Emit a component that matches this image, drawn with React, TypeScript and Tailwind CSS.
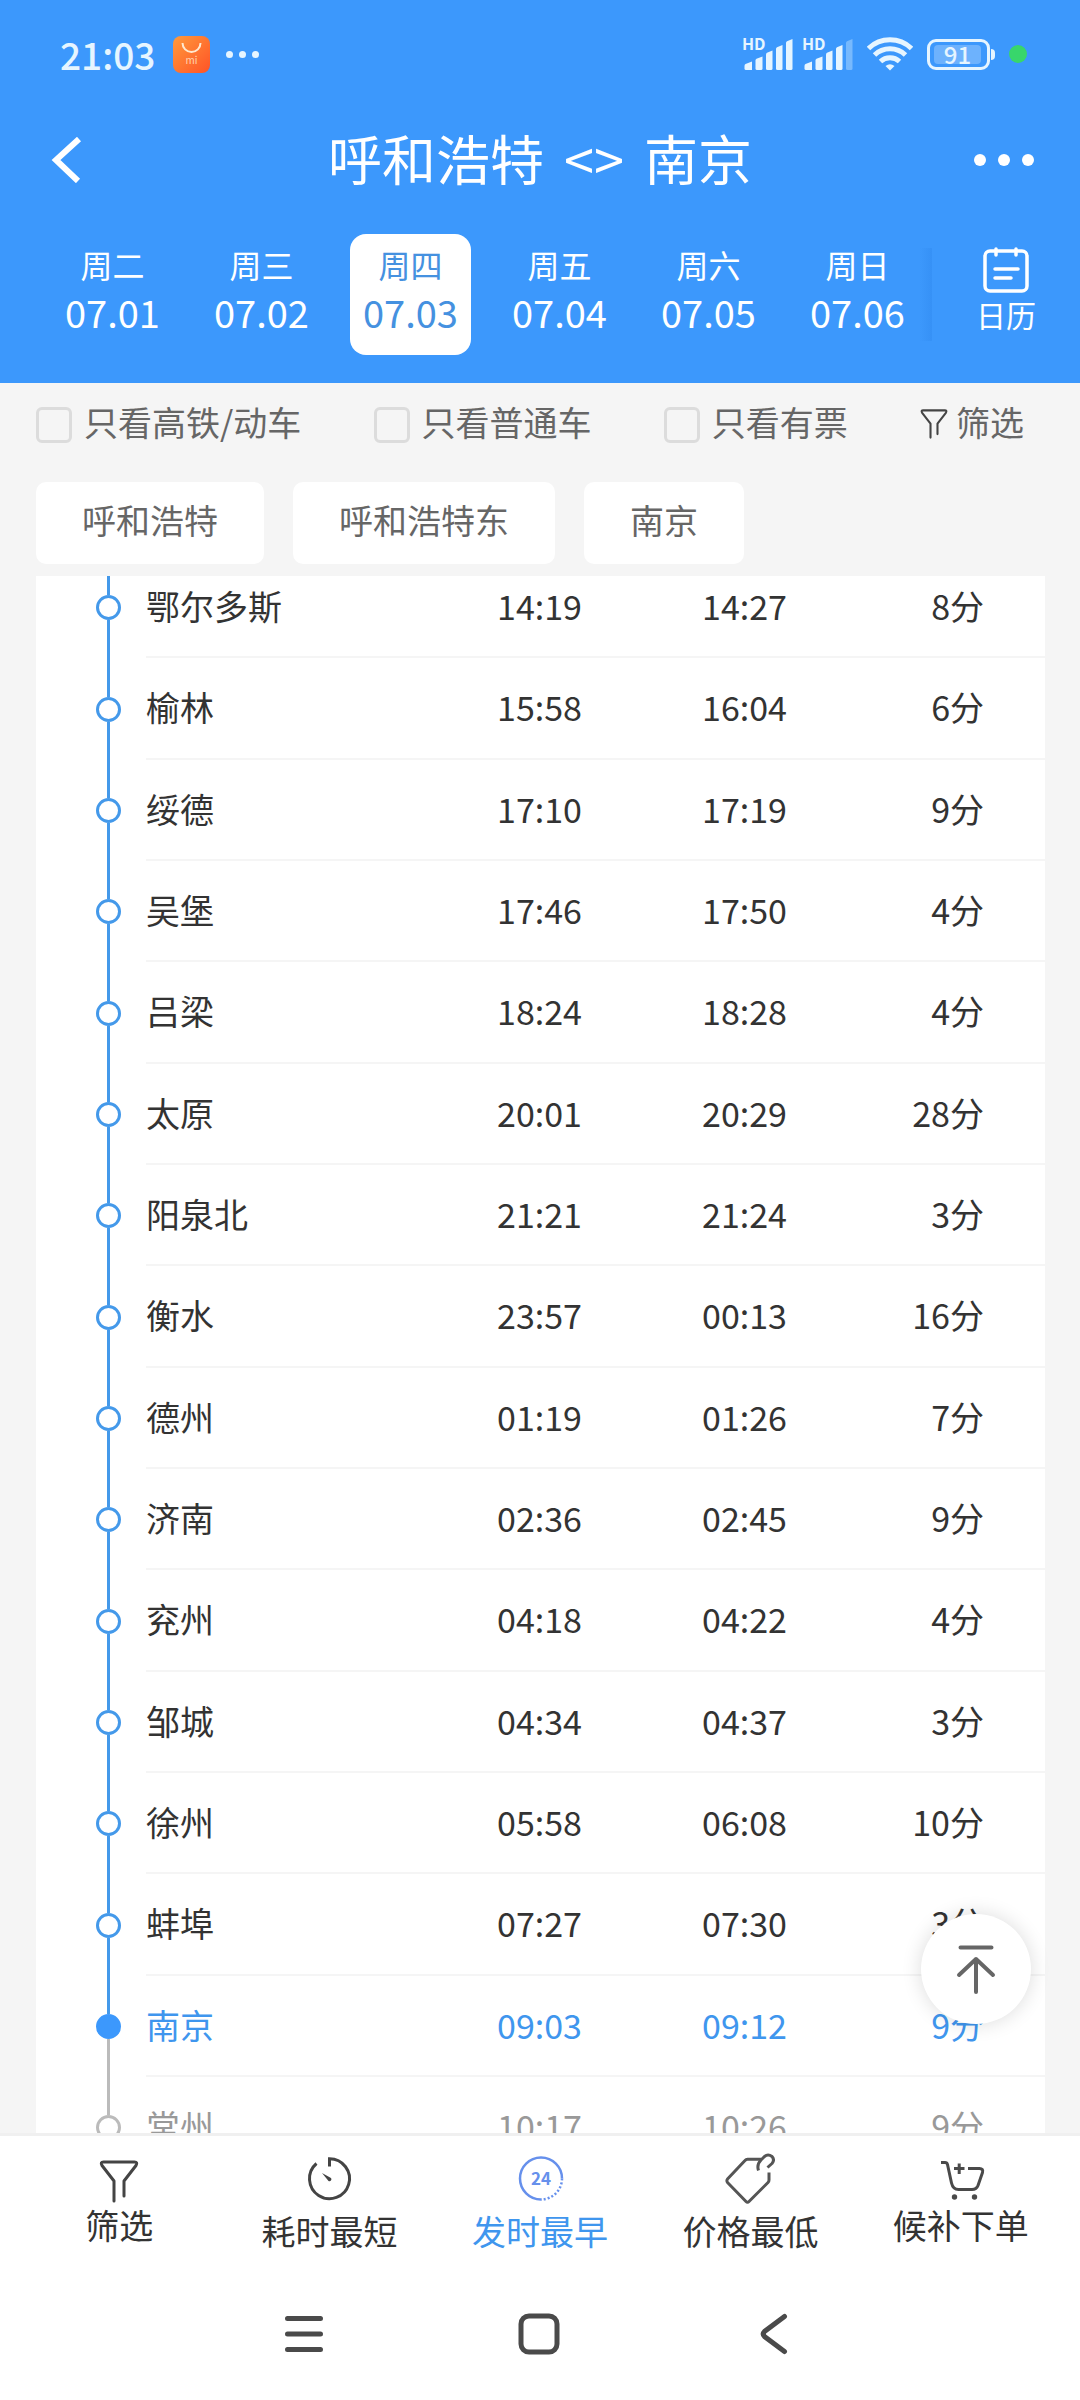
import { useState } from "react";

type Stop = {
  name: string;
  arrive: string;
  depart: string;
  stay: string;
  state?: "current" | "after";
};

const days = [
  { week: "周二", date: "07.01" },
  { week: "周三", date: "07.02" },
  { week: "周四", date: "07.03" },
  { week: "周五", date: "07.04" },
  { week: "周六", date: "07.05" },
  { week: "周日", date: "07.06" },
];

const filters = ["只看高铁/动车", "只看普通车", "只看有票"];

const stations = ["呼和浩特", "呼和浩特东", "南京"];

const stops: Stop[] = [
  { name: "鄂尔多斯", arrive: "14:19", depart: "14:27", stay: "8分" },
  { name: "榆林", arrive: "15:58", depart: "16:04", stay: "6分" },
  { name: "绥德", arrive: "17:10", depart: "17:19", stay: "9分" },
  { name: "吴堡", arrive: "17:46", depart: "17:50", stay: "4分" },
  { name: "吕梁", arrive: "18:24", depart: "18:28", stay: "4分" },
  { name: "太原", arrive: "20:01", depart: "20:29", stay: "28分" },
  { name: "阳泉北", arrive: "21:21", depart: "21:24", stay: "3分" },
  { name: "衡水", arrive: "23:57", depart: "00:13", stay: "16分" },
  { name: "德州", arrive: "01:19", depart: "01:26", stay: "7分" },
  { name: "济南", arrive: "02:36", depart: "02:45", stay: "9分" },
  { name: "兖州", arrive: "04:18", depart: "04:22", stay: "4分" },
  { name: "邹城", arrive: "04:34", depart: "04:37", stay: "3分" },
  { name: "徐州", arrive: "05:58", depart: "06:08", stay: "10分" },
  { name: "蚌埠", arrive: "07:27", depart: "07:30", stay: "3分" },
  { name: "南京", arrive: "09:03", depart: "09:12", stay: "9分", state: "current" },
  { name: "常州", arrive: "10:17", depart: "10:26", stay: "9分", state: "after" },
];

function Signal({ weak = false }: { weak?: boolean }) {
  return (
    <svg className="overflow-visible" width="51" height="36" viewBox="0 0 51 36" fill="#e6f5ff">
      <text x="0" y="14" fontSize="16" fontWeight="700">
        HD
      </text>
      <path d="M2.500 30q0-1.400 1-2L10 25.500V34H4q-1.500 0-1.500-1.500z" />
      <path d="M13.500 24.500q0-1.200 1-1.700l6-2.300V32.500q0 1.500-1.500 1.500h-4q-1.500 0-1.500-1.500z" />
      <path d="M24 18.500q0-1.200 1-1.800l5.500-2.200v18q0 1.500-1.500 1.500h-3.500q-1.500 0-1.500-1.500z" />
      <path d="M34 13q0-1.200 1-1.800L40.500 9v23.500q0 1.500-1.500 1.500h-3.500q-1.500 0-1.500-1.500z" />
      <path
        d="M44 7q0-1.200 1-1.800L50.500 3v29.500q0 1.500-1.500 1.500h-3.500q-1.500 0-1.500-1.500z"
        opacity={weak ? 0.35 : 1}
      />
    </svg>
  );
}

function Wifi() {
  return (
    <svg width="46" height="34" viewBox="0 0 46 34" fill="none" stroke="#e6f5ff" strokeWidth="5">
      <path d="M1.500 11.500a31 31 0 0 1 43 0" />
      <path d="M7.500 18a22.500 22.500 0 0 1 31 0" />
      <path d="M13.500 24.500a14 14 0 0 1 19 0" />
      <path d="M18.500 29q4.500-3.500 9 0L23 33.500z" fill="#e6f5ff" stroke="none" />
    </svg>
  );
}

function Funnel({ className }: { className: string }) {
  return (
    <svg
      className={className}
      viewBox="4 7 40 43"
      fill="none"
      stroke="currentColor"
      strokeWidth="3"
      strokeLinecap="round"
      strokeLinejoin="round"
    >
      <path d="M19 48V28L7 12.500Q5 9 8.500 9H39.500Q43 9 41 12.500L29 28V43" />
    </svg>
  );
}

function TimerIcon() {
  return (
    <svg width="50" height="56" viewBox="0 0 50 56" fill="none" stroke="#444" strokeWidth="3">
      <path d="M24.500 13.500V5.700A20 20 0 1 1 11.500 10.500" />
      <path d="M17 20l9 5a2 2 0 0 1-2.500 3z" fill="#444" stroke="none" />
    </svg>
  );
}

function Clock24() {
  return (
    <svg width="50" height="56" viewBox="0 0 50 56" fill="none" stroke="#6690ec" strokeWidth="2.500">
      <path d="M26 46.500A21 21 0 1 1 47 25.500" />
      <path d="M47 25.500A21 21 0 0 1 26 46.500" strokeDasharray="2 2" />
      <text
        x="26"
        y="31.500"
        fontSize="17"
        fontWeight="700"
        textAnchor="middle"
        fill="#6690ec"
        stroke="none"
      >
        24
      </text>
    </svg>
  );
}

function TagIcon() {
  return (
    <svg
      width="50"
      height="56"
      viewBox="0 0 50 56"
      fill="none"
      stroke="#555"
      strokeWidth="3"
      strokeLinejoin="round"
    >
      <path d="M36 6.300H22.500Q21 6.300 20 7.500L2.500 26Q1.300 27.700 2.500 29.500L21 48.500Q22.500 50 24 48.500L43 29.500Q44 28.500 44 27V19.500" />
      <path d="M33.500 17.500Q31.500 11.500 36 7L39.500 3.500Q43 .5 47 3.500Q50 7 47 10.500L42.500 14.500" />
    </svg>
  );
}

function CartIcon() {
  return (
    <svg
      width="50"
      height="50"
      viewBox="0 0 50 50"
      fill="none"
      stroke="#4a4a4a"
      strokeWidth="3"
      strokeLinejoin="round"
    >
      <path d="M5 9.500H9Q11 9.500 11.500 11.500L15.500 30Q17 36.500 22.500 36.500H36Q40.500 36.500 42 32.500L46.500 19.500Q47.500 15.500 43.500 15.500H32" />
      <path d="M18 15.500h10.500M23.200 10.500v10.500" />
      <circle cx="18.500" cy="44" r="2.700" fill="#4a4a4a" stroke="none" />
      <circle cx="38.500" cy="44" r="2.700" fill="#4a4a4a" stroke="none" />
    </svg>
  );
}

const sorts = [
  {
    label: "筛选",
    icon: (
      <span className="flex h-[50px] items-end text-[#444]">
        <Funnel className="h-[43px] w-10" />
      </span>
    ),
  },
  { label: "耗时最短", icon: <TimerIcon /> },
  { label: "发时最早", icon: <Clock24 /> },
  { label: "价格最低", icon: <TagIcon /> },
  { label: "候补下单", icon: <CartIcon /> },
];

function StatusBar() {
  return (
    <div className="flex h-[108px] items-center justify-between pl-[60px] pr-[53px] text-[#e6f5ff]">
      <div className="flex items-center">
        <span className="text-[37px] leading-[44px] font-medium">21:03</span>
        <svg className="ml-[18px]" width="37" height="37" viewBox="0 0 37 37">
          <defs>
            <linearGradient id="store" x1="0" y1="0" x2="1" y2="1">
              <stop offset="0" stopColor="#ff9a3c" />
              <stop offset="1" stopColor="#ff5326" />
            </linearGradient>
          </defs>
          <rect width="37" height="37" rx="8" fill="url(#store)" />
          <path d="M9.500 7a9 9 0 0 0 18 0" fill="none" stroke="#ffe9cf" strokeWidth="2" />
          <text x="18.500" y="28" fontSize="10" textAnchor="middle" fill="#ffd3b0">
            mi
          </text>
        </svg>
        <span className="ml-4 flex gap-1.5">
          <i className="size-[7px] rounded-full bg-[#e6f5ff]" />
          <i className="size-[7px] rounded-full bg-[#e6f5ff]" />
          <i className="size-[7px] rounded-full bg-[#e6f5ff]" />
        </span>
      </div>
      <div className="flex items-center gap-3.5">
        <span className="flex gap-[9px]">
          <Signal />
          <Signal weak />
        </span>
        <Wifi />
        <span className="flex items-center gap-px">
          <span className="flex h-[31px] w-[63px] items-center rounded-[9px] border-3 border-[#e6f5ff] px-1">
            <span className="flex h-[19px] w-[47px] items-center justify-center rounded-sm bg-white/25 text-[24px] leading-[24px] font-medium">
              91
            </span>
          </span>
          <i className="h-[11px] w-1 rounded-r-sm bg-[#e6f5ff]" />
        </span>
        <i className="size-[18px] rounded-full bg-[#38d66b]" />
      </div>
    </div>
  );
}

function StopRow({ stop, tall }: { stop: Stop; tall: boolean }) {
  const current = stop.state === "current";
  const after = stop.state === "after";
  const color = current ? "text-[#3f96ee]" : after ? "text-[#999]" : "text-[#333]";
  return (
    <tr className={`${tall ? "h-[102px]" : "h-[101px]"} ${color}`}>
      <td className="h-px p-0 pr-[25px] pl-[60px]">
        <div className="flex h-full flex-col items-center">
          <i className={`w-[3px] flex-1 ${after ? "bg-[#bbb]" : "bg-[#4499ea]"}`} />
          <i
            className={`size-[25px] rounded-full border-3 ${
              current
                ? "border-[#3c98fc] bg-[#3c98fc]"
                : after
                  ? "border-[#bbb]"
                  : "border-[#4499ea]"
            }`}
          />
          <i className={`w-[3px] flex-1 ${after || current ? "bg-[#bbb]" : "bg-[#4499ea]"}`} />
        </div>
      </td>
      <th scope="row" className="border-b-2 border-[#f5f5f5] p-0 pb-0.5 text-left font-normal">
        {stop.name}
      </th>
      <td className="border-b-2 border-[#f5f5f5] p-0 pb-0.5 text-center">{stop.arrive}</td>
      <td className="border-b-2 border-[#f5f5f5] p-0 pb-0.5 text-center">{stop.depart}</td>
      <td className="border-b-2 border-[#f5f5f5] p-0 pr-[61px] pb-0.5 text-right">{stop.stay}</td>
    </tr>
  );
}

export default function App() {
  const [day, setDay] = useState("07.03");
  const [sort, setSort] = useState("发时最早");

  return (
    <div className="flex h-screen flex-col bg-[#f5f5f5] font-['Noto_Sans_CJK_SC',sans-serif] text-[34px] leading-[44px] text-[#333]">
      <header className="bg-[#3c98fc] text-white">
        <StatusBar />
        <div className="flex h-[104px] items-center justify-between pr-[46px] pl-[50px]">
          <button aria-label="返回" className="w-[60px]">
            <svg width="32" height="46" viewBox="0 0 32 46" fill="none" stroke="#fff" strokeWidth="6">
              <path d="M29 2L6 23L28 44" />
            </svg>
          </button>
          <h1 className="pr-1 pb-1 text-[54px] leading-[64px]">
            呼和浩特<span className="mx-5">&lt;&gt;</span>南京
          </h1>
          <button aria-label="更多" className="flex gap-3">
            <i className="size-3 rounded-full bg-white" />
            <i className="size-3 rounded-full bg-white" />
            <i className="size-3 rounded-full bg-white" />
          </button>
        </div>

        <div className="flex pt-[22px] pb-7 pl-[38px]">
          <div className="grid flex-1 grid-cols-6 justify-items-center">
            {days.map((d) => (
              <button
                key={d.date}
                onClick={() => setDay(d.date)}
                className={`flex h-[121px] w-[121px] flex-col items-center rounded-2xl pt-2 ${
                  d.date === day ? "bg-white text-[#4591e0]" : ""
                }`}
              >
                <span className="text-[32px] leading-[44px]">{d.week}</span>
                <span className="text-[38px] leading-[52px]">{d.date}</span>
              </button>
            ))}
          </div>
          <div className="my-3.5 -ml-3 w-3 bg-linear-to-r from-[#3c98fc] to-[#3691f6]" />
          <button className="flex w-[148px] flex-col items-center pt-3">
            <svg
              width="46"
              height="48"
              viewBox="0 0 46 48"
              fill="none"
              stroke="#fff"
              strokeWidth="3.500"
              strokeLinecap="round"
            >
              <rect x="2" y="5" width="42" height="40" rx="5" />
              <path d="M13 3v6M33 3v6M12 23h23M12 32h16" />
            </svg>
            <span className="text-[30px] leading-[40px]">日历</span>
          </button>
        </div>
      </header>

      <div className="flex h-[78px] items-center justify-between pr-14 pl-9 text-[#666]">
        {filters.map((f) => (
          <label key={f} className="flex items-center gap-3">
            <input
              type="checkbox"
              className="mt-1.5 size-9 appearance-none rounded-md border-3 border-[#dcdcdc] checked:border-[#3c98fc] checked:bg-[#3c98fc]"
            />
            {f}
          </label>
        ))}
        <button className="flex items-center gap-2">
          <Funnel className="mt-1 h-[30px] w-7 text-[#444]" />
          筛选
        </button>
      </div>

      <div className="mt-[21px] mb-3 flex gap-[29px] px-9 text-[#666]">
        {stations.map((s) => (
          <button key={s} className="h-[82px] rounded-[10px] bg-white px-[46px] pb-1.5">
            {s}
          </button>
        ))}
      </div>

      <main className="relative min-h-0 flex-1 overflow-hidden pr-[35px] pl-9">
        {/* list is scrolled, the first row sits partly under the chips */}
        <table className="-mt-[19px] w-full table-fixed border-separate border-spacing-0 bg-white">
          <colgroup>
            <col className="w-[110px]" />
            <col />
            <col className="w-[205px]" />
            <col className="w-[205px]" />
            <col className="w-[198px]" />
          </colgroup>
          <tbody>
            {stops.map((s, i) => (
              <StopRow key={s.name} stop={s} tall={i % 3 === 1} />
            ))}
          </tbody>
        </table>
        <button
          aria-label="回到顶部"
          className="absolute right-[49px] bottom-[109px] flex size-[110px] items-center justify-center rounded-full bg-white shadow-[0_0_20px_rgba(0,0,0,0.14)]"
        >
          <svg
            width="40"
            height="50"
            viewBox="0 0 40 50"
            fill="none"
            stroke="#666"
            strokeWidth="4"
            strokeLinecap="round"
            strokeLinejoin="round"
          >
            <path d="M4.500 3.500h31M20 48V15M3 31L20 15L37 31" />
          </svg>
        </button>
      </main>

      <footer className="bg-white">
        <div className="grid h-[135px] grid-cols-5 border-t-3 border-[#f0f0f0] px-3.5">
          {sorts.map((s) => (
            <button
              key={s.label}
              onClick={() => setSort(s.label)}
              className={`flex flex-col items-center pt-[17px] ${
                s.label === sort ? "text-[#3f96ee]" : ""
              }`}
            >
              {s.icon}
              <span>{s.label}</span>
            </button>
          ))}
        </div>
        <div className="grid h-[132px] grid-cols-3 items-center justify-items-center pr-[189px] pl-[186px]">
          <button aria-label="最近任务">
            <svg width="40" height="40" viewBox="0 0 40 40" stroke="#4a4a4a" strokeWidth="5" strokeLinecap="round">
              <path d="M3.500 4.500h33M3.500 20h33M3.500 35.500h33" />
            </svg>
          </button>
          <button aria-label="主页">
            <svg width="42" height="42" viewBox="0 0 42 42" fill="none" stroke="#4a4a4a" strokeWidth="5">
              <rect x="3" y="3" width="36" height="36" rx="8" />
            </svg>
          </button>
          <button aria-label="后退">
            <svg
              width="28"
              height="42"
              viewBox="0 0 28 42"
              fill="none"
              stroke="#4a4a4a"
              strokeWidth="5"
              strokeLinecap="round"
            >
              <path d="M24.500 3.500L4.500 18.500Q2 21 4.500 23.500L24.500 38.500" />
            </svg>
          </button>
        </div>
      </footer>
    </div>
  );
}
